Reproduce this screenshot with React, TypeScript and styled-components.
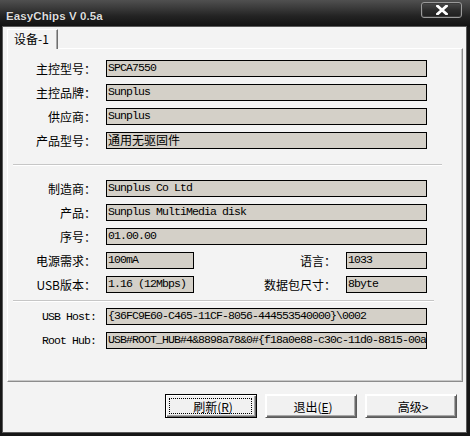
import React from "react";
import styled, { createGlobalStyle } from "styled-components";

const Global = createGlobalStyle`
  html, body { margin: 0; padding: 0; background: #000; overflow: hidden; }
  * { box-sizing: border-box; }
`;

const CJK = `"Noto Sans CJK SC", "Noto Sans", sans-serif`;
const MONO = `"Liberation Mono", "Noto Sans CJK SC", monospace`;

const Window = styled.div`
  width: 470px;
  height: 436px;
  display: flex;
  flex-direction: column;
  background: #161616;
`;

const TitleBar = styled.div`
  height: 27px;
  display: flex;
  align-items: flex-start;
  background: linear-gradient(180deg, #505050 0%, #3a3a3a 30%, #232323 60%, #111 100%);
`;

const Title = styled.div`
  font-family: "Liberation Sans", Arial, sans-serif;
  font-weight: bold;
  font-size: 11.5px;
  line-height: 16px;
  color: #dcdcdc;
  padding: 8px 0 0 6px;
  letter-spacing: 0.1px;
  text-shadow: 0 0 1px #000;
`;

const CloseButton = styled.div`
  margin: 2px 8px 0 auto;
  width: 41px;
  height: 16px;
  border: 1px solid #9a9a9a;
  border-radius: 3px;
  background: linear-gradient(180deg, #4a4a4a 0%, #2c2c2c 50%, #1e1e1e 100%);
  display: flex;
  align-items: center;
  justify-content: center;
  box-shadow: inset 0 0 0 1px #3a3a3a;
`;

const Frame = styled.div`
  flex: 1;
  padding: 0 4px 4px 3px;
  display: flex;
`;

const Body = styled.div`
  flex: 1;
  background: #f3f3f3;
  display: flex;
  flex-direction: column;
  box-shadow: 0 0 0 1px #5a5a5a;
`;

const TabStrip = styled.div`
  height: 21px;
  padding-left: 4px;
  display: flex;
  align-items: flex-end;
`;

const Tab = styled.div`
  position: relative;
  z-index: 1;
  width: 51px;
  height: 20px;
  margin-bottom: -1px;
  background: #f3f3f3;
  border-top: 1px solid #fff;
  border-left: 1px solid #fff;
  border-right: 1px solid #6e6e6e;
  box-shadow: inset -1px 0 #a8a8a8;
  font-family: ${CJK};
  font-size: 12px;
  color: #000;
  padding: 1px 0 0 6px;
  line-height: 16px;
`;

const Panel = styled.div`
  height: 334px;
  margin: 0 3px 0 4px;
  border-top: 1px solid #fff;
  border-left: 1px solid #fff;
  border-right: 1px solid #8c8c8c;
  border-bottom: 1px solid #8c8c8c;
  box-shadow: inset -1px -1px #c8c8c8;
  padding-top: 11px;
  display: flex;
  flex-direction: column;
`;

const Group = styled.div`
  display: flex;
  flex-direction: column;
  gap: 7px;
`;

const Row = styled.div<{ $cols?: string }>`
  display: grid;
  grid-template-columns: ${(p) => p.$cols ?? "88px 321px"};
  column-gap: 10px;
  align-items: center;
  height: 17px;
`;

const Label = styled.div<{ $mono?: boolean }>`
  text-align: right;
  font-family: ${(p) => (p.$mono ? MONO : CJK)};
  font-size: ${(p) => (p.$mono ? "11.5px" : "12px")};
  letter-spacing: ${(p) => (p.$mono ? "-0.9px" : "0")};
  color: #000;
  white-space: nowrap;
  line-height: 17px;
`;

const Field = styled.div<{ $cjk?: boolean }>`
  height: 17px;
  background: #d4d0c8;
  border: 1px solid #000;
  font-family: ${(p) => (p.$cjk ? CJK : MONO)};
  font-size: ${(p) => (p.$cjk ? "12px" : "11.5px")};
  letter-spacing: ${(p) => (p.$cjk ? "0" : "-0.9px")};
  line-height: 14px;
  padding: 0 0 0 1px;
  color: #000;
  white-space: nowrap;
  overflow: hidden;
`;

const Separator = styled.div<{ $w: number; $top: number; $bottom: number }>`
  width: ${(p) => p.$w}px;
  margin: ${(p) => p.$top}px 0 ${(p) => p.$bottom}px 5px;
  border-top: 1px solid #c6c6c6;
  border-bottom: 1px solid #fff;
`;

const ButtonBar = styled.div`
  display: flex;
  justify-content: flex-end;
  gap: 8px;
  padding: 12px 9px 0 0;
`;

const Button = styled.div<{ $default?: boolean }>`
  position: relative;
  width: 92px;
  height: 24px;
  background: #f1f1f1;
  border: 1px solid #000;
  box-shadow: inset 1px 1px #fff, inset -1px -1px #6a6a6a, inset -2px -2px #a8a8a8;
  ${(p) =>
    p.$default
      ? ""
      : "border-top-color: #fff; border-left-color: #fff; border-right-color: #5a5a5a; border-bottom-color: #5a5a5a;"}
  display: flex;
  align-items: center;
  justify-content: center;
  font-family: ${CJK};
  font-size: 12px;
  color: #000;
  u { text-decoration: underline; }
`;

const FocusRing = styled.div`
  position: absolute;
  inset: 3px 4px 3px 3px;
  border: 1px dotted #000;
  pointer-events: none;
`;

const ButtonText = styled.span`
  padding-left: 4px;
`;

export default function App() {
  return (
    <>
      <Global />
      <Window>
        <TitleBar>
          <Title>EasyChips V 0.5a</Title>
          <CloseButton>
            <svg width="12" height="10" viewBox="0 0 12 10">
              <path d="M1.5 1 L10.5 9 M10.5 1 L1.5 9" stroke="#fff" strokeWidth="2.8" strokeLinecap="square" />
            </svg>
          </CloseButton>
        </TitleBar>
        <Frame>
          <Body>
            <TabStrip>
              <Tab>设备-1</Tab>
            </TabStrip>
            <Panel>
              <Group>
                <Row>
                  <Label>主控型号：</Label>
                  <Field>SPCA7550</Field>
                </Row>
                <Row>
                  <Label>主控品牌：</Label>
                  <Field>Sunplus</Field>
                </Row>
                <Row>
                  <Label>供应商：</Label>
                  <Field>Sunplus</Field>
                </Row>
                <Row>
                  <Label>产品型号：</Label>
                  <Field $cjk>通用无驱固件</Field>
                </Row>
              </Group>
              <Separator $w={429} $top={15} $bottom={14} />
              <Group>
                <Row>
                  <Label>制造商：</Label>
                  <Field>Sunplus Co Ltd</Field>
                </Row>
                <Row>
                  <Label>产品：</Label>
                  <Field>Sunplus MultiMedia disk</Field>
                </Row>
                <Row>
                  <Label>序号：</Label>
                  <Field>01.00.00</Field>
                </Row>
                <Row $cols="88px 88px 132px 81px">
                  <Label>电源需求：</Label>
                  <Field>100mA</Field>
                  <Label>语言：</Label>
                  <Field>1033</Field>
                </Row>
                <Row $cols="88px 88px 132px 81px">
                  <Label>USB版本：</Label>
                  <Field>1.16 (12Mbps)</Field>
                  <Label>数据包尺寸：</Label>
                  <Field>8byte</Field>
                </Row>
              </Group>
              <Separator $w={421} $top={7} $bottom={6} />
              <Group>
                <Row>
                  <Label $mono>USB Host:</Label>
                  <Field>{"{36FC9E60-C465-11CF-8056-444553540000}\\0002"}</Field>
                </Row>
                <Row>
                  <Label $mono>Root Hub:</Label>
                  <Field>{"USB#ROOT_HUB#4&8898a78&0#{f18a0e88-c30c-11d0-8815-00a"}</Field>
                </Row>
              </Group>
            </Panel>
            <ButtonBar>
              <Button $default>
                <FocusRing />
                <ButtonText>
                  刷新(<u>R</u>)
                </ButtonText>
              </Button>
              <Button>
                <ButtonText>
                  退出(<u>E</u>)
                </ButtonText>
              </Button>
              <Button>
                <ButtonText>高级&gt;</ButtonText>
              </Button>
            </ButtonBar>
          </Body>
        </Frame>
      </Window>
    </>
  );
}
